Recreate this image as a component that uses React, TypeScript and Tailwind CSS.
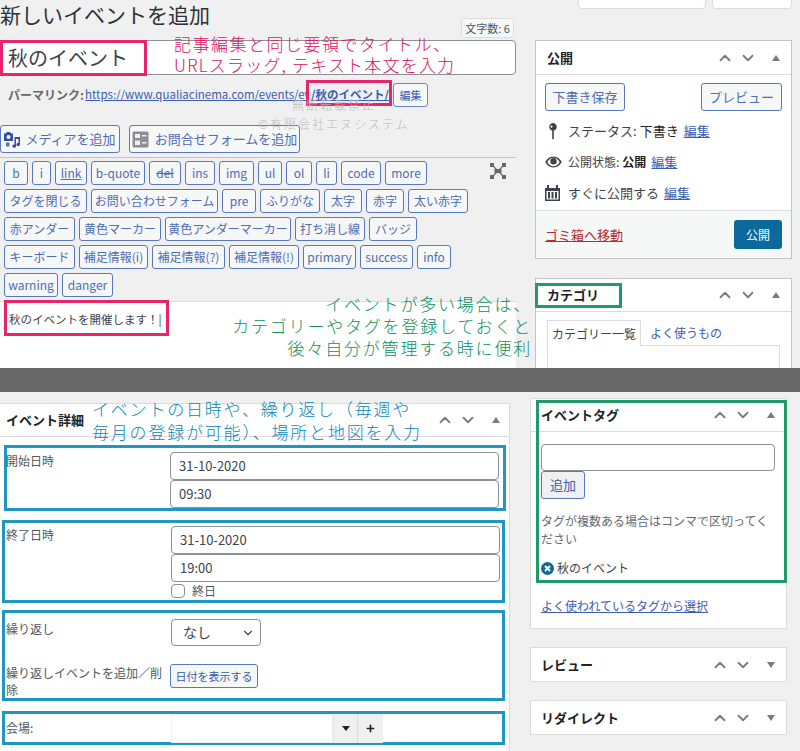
import { ChevronDown, ChevronUp, Plus } from 'lucide-react';

const toolbarRows: [string, string, string?][][] = [
  [
    ['b', 'w-[24px]'], ['i', 'w-[19px]'], ['link', 'w-[32px]', 'underline'], ['b-quote', 'w-[54px]'],
    ['del', 'w-[32px]', 'line-through'], ['ins', 'w-[30px]'], ['img', 'w-[35px]'], ['ul', 'w-[24px]'],
    ['ol', 'w-[26px]'], ['li', 'w-[21px]'], ['code', 'w-[40px]'], ['more', 'w-[42px]'],
  ],
  [
    ['タグを閉じる', 'w-[83px]'], ['お問い合わせフォーム', 'w-[127px]'], ['pre', 'w-[34px]'], ['ふりがな', 'w-[60px]'],
    ['太字', 'w-[38px]'], ['赤字', 'w-[38px]'], ['太い赤字', 'w-[60px]'],
  ],
  [
    ['赤アンダー', 'w-[71px]'], ['黄色マーカー', 'w-[82px]'], ['黄色アンダーマーカー', 'w-[126px]'],
    ['打ち消し線', 'w-[70px]'], ['バッジ', 'w-[48px]'],
  ],
  [
    ['キーボード', 'w-[71px]'], ['補足情報(i)', 'w-[69px]'], ['補足情報(?)', 'w-[73px]'], ['補足情報(!)', 'w-[70px]'],
    ['primary', 'w-[53px]'], ['success', 'w-[53px]'], ['info', 'w-[34px]'],
  ],
  [['warning', 'w-[54px]'], ['danger', 'w-[51px]']],
];

function BoxControls({ open = true }: { open?: boolean }) {
  return (
    <div className="flex items-center text-[#787c82]">
      <ChevronUp size={18} strokeWidth={2.4} />
      <ChevronDown size={18} strokeWidth={2.4} className="ml-[5px]" />
      <svg width="10" height="8" viewBox="0 0 10 8" className="ml-[14px] mr-[1px]" fill="#787c82">
        {open ? <path d="M5 1l4 6H1z" /> : <path d="M5 7L1 1h8z" />}
      </svg>
    </div>
  );
}

function BoxHeader({ title, pad = 'pl-[10px]' }: { title: string; pad?: string }) {
  return (
    <div className={`flex h-[33px] items-center justify-between border-b border-[#dcdcde] pr-[9px] ${pad}`}>
      <span className="text-[13px] font-bold text-[#1d2327]">{title}</span>
      <BoxControls />
    </div>
  );
}

function DateInput({ value }: { value: string }) {
  return (
    <div className="flex h-[28px] w-[329px] items-center rounded-[4px] border border-[#8c8f94] bg-white pl-[8px] text-[13px] text-[#3c434a]">
      {value}
    </div>
  );
}

export default function App() {
  return (
    <div className="h-[751px] w-[800px] overflow-hidden bg-[#f0f0f1] font-['Noto_Sans_CJK_JP',sans-serif] text-[#3c434a]">
      {/* upper capture */}
      <section className="relative flex h-[368px] overflow-hidden">
        <div className="w-[516px] shrink-0">
          <div className="flex h-[40px] items-start justify-between">
            <h1 className="mt-[-2px] text-[21px] leading-[32px] text-[#2c3338]">新しいイベントを追加</h1>
            <div className="mt-[18px] mr-[2px] flex h-[20px] w-[53px] items-center justify-center rounded-[3px] border border-[#dcdcde] bg-[#f6f7f7] text-[11px] text-[#50575e]">
              文字数: 6
            </div>
          </div>
          <div className="flex h-[35px] items-center rounded-[4px] border border-[#8c8f94] bg-white pl-[7px] text-[20px] text-[#3c434a]">
            秋のイベント
          </div>
          <div className="mt-[8px] flex h-[24px] items-center pl-[8px] text-[12px]">
            <span className="w-[75px] whitespace-nowrap font-bold text-[#646970]">パーマリンク:</span>
            <a className="ml-[2px] w-[221px] overflow-hidden whitespace-nowrap text-[11.500px] text-[#3b5cb0] underline">https://www.qualiacinema.com/events/event/</a>
            <a className="ml-[5px] w-[82px] whitespace-nowrap text-[11.500px] font-bold text-[#3b5cb0] underline">/秋のイベント/</a>
            <span className="flex h-[24px] w-[35px] items-center justify-center rounded-[3px] border border-[#6d86c4] bg-[#f6f7f7] text-[11px] text-[#3b5cb0]">編集</span>
          </div>
          <div className="mt-[18px] flex gap-[9px] border-b border-[#c3c4c7] pb-[4px]">
            <button className="flex h-[28px] w-[120px] items-center justify-center gap-[5px] rounded-[3px] border border-[#5a78c0] bg-[#f6f7f7] text-[13px] text-[#4f6cb6]">
              <svg width="16" height="17" viewBox="0 0 16 17" fill="#33509f">
                <path d="M3 1h3l1 1.500h2v7.500H0V2.500h2zM4.500 4a2 2 0 1 0 .01 0z" fillRule="evenodd" />
                <path d="M10.500 6H16v7.500a1.800 1.600 0 1 1-1.500-1.500V8h-2.500v7a1.800 1.600 0 1 1-1.500-1.500z" />
                <path d="M2 11.500h3.500v4H2z" opacity="0.8" />
              </svg>
              メディアを追加
            </button>
            <button className="flex h-[28px] w-[171px] items-center justify-center gap-[6px] rounded-[3px] border border-[#5a78c0] bg-[#f6f7f7] text-[13px] text-[#4f6cb6]">
              <svg width="17" height="17" viewBox="0 0 17 17">
                <rect x="0.500" y="0.500" width="16" height="16" rx="1.500" fill="#8c8f94" />
                <rect x="3" y="3" width="5" height="4" fill="#f0f0f1" />
                <rect x="3" y="9.500" width="5" height="4.500" fill="#f0f0f1" />
                <rect x="10" y="4" width="4.500" height="1.500" fill="#f0f0f1" />
                <rect x="10" y="11" width="4.500" height="1.500" fill="#f0f0f1" />
              </svg>
              お問合せフォームを追加
            </button>
          </div>
          <div className="relative flex h-[143px] flex-col gap-[4px] pl-[4px] pt-[3px]">
            {toolbarRows.map((row, r) => (
              <div key={r} className="flex gap-[4px]">
                {row.map(([label, w, deco]) => (
                  <span key={label} className={`flex h-[24px] items-center justify-center rounded-[3px] border border-[#5a78c0] bg-[#f6f7f7] text-[12px] text-[#4f6cb6] ${w} ${deco ?? ''}`}>
                    {label}
                  </span>
                ))}
              </div>
            ))}
            <svg width="16" height="16" viewBox="0 0 16 16" className="absolute left-[490px] top-[5px]" fill="#646970" stroke="#646970">
              <path d="M2 2l12 12M14 2L2 14" strokeWidth="1.200" />
              <path d="M0 0h4v4H0zM12 0h4v4h-4zM0 12h4v4H0zM12 12h4v4h-4zM4.500 6h7v4h-7z" stroke="none" />
            </svg>
          </div>
          <div className="h-[68px] border-t border-[#dcdcde] bg-white pl-[9px] pt-[9px] text-[11.500px] text-[#3c434a]">
            秋のイベントを開催します！|
          </div>
        </div>

        <aside className="relative ml-[19px] w-[257px] shrink-0">
          <div className="mt-[-4px] mb-[31px] flex justify-end gap-[6px]">
            <div className="h-[13px] w-[128px] rounded-[4px] border border-[#dcdcde] bg-white" />
            <div className="h-[13px] w-[80px] rounded-[4px] border border-[#dcdcde] bg-white" />
          </div>
          <div className="border border-[#c3c4c7] bg-white">
            <div className="flex h-[34px] items-center justify-between border-b border-[#dcdcde] pl-[11px] pr-[9px]">
              <span className="text-[13px] font-bold text-[#1d2327]">公開</span>
              <BoxControls />
            </div>
            <div className="px-[9px] pt-[8px]">
              <div className="flex justify-between">
                <span className="flex h-[28px] w-[80px] items-center justify-center rounded-[3px] border border-[#5a78c0] bg-[#f6f7f7] text-[13px] text-[#4f6cb6]">下書き保存</span>
                <span className="flex h-[28px] w-[81px] items-center justify-center rounded-[3px] border border-[#5a78c0] bg-[#f6f7f7] text-[13px] text-[#4f6cb6]">プレビュー</span>
              </div>
              <div className="mt-[4px] flex h-[31px] items-center text-[13px]">
                <svg width="16" height="18" viewBox="0 0 16 18" fill="#3c434a" className="mr-[7px]">
                  <path d="M8 1a3.800 3.800 0 1 1-.01 0zM6.500 3.500a1 1 0 1 0 .01 0z" fillRule="evenodd" />
                  <path d="M7.200 8h1.600v8.500L8 17.500l-.8-1z" />
                </svg>
                ステータス: <b className="ml-[3px] font-normal text-[#1d2327]">下書き</b>
                <a className="ml-[5px] text-[#3b5cb0] underline">編集</a>
              </div>
              <div className="flex h-[31px] items-center text-[12px]">
                <svg width="17" height="14" viewBox="0 0 17 14" fill="#3c434a" className="mr-[6px]">
                  <path d="M8.500 1.500C4.500 1.500 1.500 4.500.300 7c1.200 2.500 4.200 5.500 8.200 5.500s7-3 8.200-5.500c-1.200-2.500-4.200-5.500-8.200-5.500zm0 9.800C5.800 11.300 3.500 9.300 2.300 7c1.200-2.300 3.500-4.300 6.200-4.300s5 2 6.200 4.300c-1.200 2.300-3.500 4.300-6.200 4.300z" />
                  <circle cx="8.500" cy="6.300" r="3.200" />
                </svg>
                公開状態: <b className="ml-[3px] text-[#1d2327]">公開</b>
                <a className="ml-[5px] text-[13px] text-[#3b5cb0] underline">編集</a>
              </div>
              <div className="flex h-[31px] items-center text-[13px]">
                <svg width="15" height="16" viewBox="0 0 15 16" fill="#3c434a" className="mr-[8px]">
                  <path d="M0 3h2V0h2v3h7V0h2v3h2v13H0zm1.500 3v8.500h12V6z" fillRule="evenodd" />
                  <path d="M3 7h2v6.500H3zM6.500 7h2v6.500h-2zM10 7h2v6.500h-2z" />
                </svg>
                すぐに公開する
                <a className="ml-[5px] text-[#3b5cb0] underline">編集</a>
              </div>
            </div>
            <div className="mt-[2px] flex h-[48px] items-center justify-between border-t border-[#dcdcde] bg-[#f6f7f7] pl-[9px] pr-[9px]">
              <a className="text-[13px] text-[#b32d2e] underline">ゴミ箱へ移動</a>
              <span className="flex h-[29px] w-[48px] items-center justify-center rounded-[3px] bg-[#0b6a9b] text-[12px] text-white">公開</span>
            </div>
          </div>
          <div className="mt-[19px] h-[120px] border border-[#c3c4c7] bg-white">
            <BoxHeader title="カテゴリ" pad="pl-[11px]" />
            <div className="flex pl-[11px] pt-[8px]">
              <span className="z-10 flex h-[26px] w-[94px] items-center justify-center border border-b-0 border-[#dcdcde] bg-white text-[12px]">カテゴリー一覧</span>
              <span className="flex h-[26px] items-center pl-[9px] text-[12px] text-[#3b5cb0]">よく使うもの</span>
            </div>
            <div className="ml-[11px] mt-[-1px] h-[40px] w-[233px] border border-[#dcdcde]" />
          </div>
        </aside>

        {/* annotations */}
        <div className="absolute left-0 top-[40px] h-[36px] w-[147px] border-[3px] border-[#e8246a]" />
        <div className="absolute left-[306px] top-[80px] h-[26px] w-[86px] border-[3px] border-[#e8246a]" />
        <div className="absolute left-[4px] top-[300px] h-[36px] w-[165px] border-[3px] border-[#e8246a]" />
        <div className="absolute left-[535px] top-[283px] h-[25px] w-[87px] border-[3px] border-[#1f9b6a]" />
        <p className="absolute left-[174px] top-[32px] whitespace-nowrap text-[17px] font-light leading-[24px] tracking-[1.500px] text-[#e0105e]">記事編集と同じ要領でタイトル、</p>
        <p className="absolute left-[174px] top-[53px] whitespace-nowrap text-[17px] font-light leading-[24px] tracking-[1.200px] text-[#e0105e]">URLスラッグ, テキスト本文を入力</p>
        <div className="absolute left-[254px] top-[95px] w-[160px] text-center text-[12px] font-light leading-[19px] tracking-[2px] text-[#b9babb]">
          <p>無断転載禁止</p>
          <p className="whitespace-nowrap">©有限会社エヌシステム</p>
        </div>
        <div className="absolute right-[268px] top-[293px] text-right text-[17px] font-light leading-[22px] tracking-[1.800px] text-[#0f8f5c]">
          <p>イベントが多い場合は、</p>
          <p>カテゴリーやタグを登録しておくと</p>
          <p>後々自分が管理する時に便利</p>
        </div>
      </section>

      <div className="h-[24px] bg-[#666766]" />

      {/* lower capture */}
      <section className="relative flex h-[359px] overflow-hidden">
        <div className="mt-[11px] h-[348px] w-[510px] shrink-0 border-r border-t border-[#dcdcde] bg-white">
          <div className="flex h-[33px] items-center justify-between border-b border-[#dcdcde] pl-[6px] pr-[7px]">
            <span className="text-[13px] font-bold text-[#1d2327]">イベント詳細</span>
            <BoxControls />
          </div>
          <div className="ml-[4px] mr-[3px] mt-[8px] flex h-[66px] border-[3px] border-[#2096c4] pt-[4px] text-[12px]">
            <span className="ml-[-1px] w-[164px] leading-[18px] text-[#50575e]">開始日時</span>
            <div>
              <DateInput value="31-10-2020" />
              <DateInput value="09:30" />
            </div>
          </div>
          <div className="ml-[2px] mr-[4px] mt-[9px] flex h-[83px] border-[3px] border-[#2096c4] pt-[3px] text-[12px]">
            <span className="w-[166px] pl-[1px] leading-[18px] text-[#50575e]">終了日時</span>
            <div>
              <DateInput value="31-10-2020" />
              <DateInput value="19:00" />
              <label className="flex h-[17px] items-center">
                <span className="h-[14px] w-[14px] rounded-[4px] border border-[#8c8f94] bg-white" />
                <span className="ml-[7px] text-[12px] text-[#50575e]">終日</span>
              </label>
            </div>
          </div>
          <div className="ml-[2px] mr-[4px] mt-[7px] h-[91px] border-[3px] border-[#2096c4] text-[12px] text-[#50575e]">
            <div className="flex pt-[6px]">
              <span className="mt-[1px] w-[166px] pl-[1px]">繰り返し</span>
              <div className="flex h-[27px] w-[90px] items-center justify-between rounded-[4px] border border-[#8c8f94] bg-white pl-[11px] pr-[5px] text-[14px] text-[#3c434a]">
                なし
                <ChevronDown size={14} strokeWidth={2} />
              </div>
            </div>
            <div className="mt-[18px] flex">
              <span className="w-[165px] pl-[1px] leading-[17px]">繰り返しイベントを追加／削除</span>
              <span className="flex h-[24px] w-[88px] items-center justify-center rounded-[3px] border border-[#5a78c0] bg-[#f6f7f7] text-[11px] text-[#3b5cb0]">日付を表示する</span>
            </div>
          </div>
          <div className="ml-[2px] mr-[4px] mt-[10px] flex h-[34px] items-center border-[3px] border-[#2096c4] text-[12px] text-[#50575e]">
            <span className="w-[166px] pl-[1px]">会場:</span>
            <div className="flex h-[29px] w-[212px] self-start">
              <div className="w-[162px] border border-[#f0f0f1] bg-white" />
              <div className="flex w-[24px] items-center justify-center border-l border-[#e5e5e5] bg-[#f0f0f1]">
                <svg width="8" height="5" viewBox="0 0 8 5" fill="#1d2327"><path d="M0 0h8L4 5z" /></svg>
              </div>
              <div className="flex w-[26px] items-center justify-center border-l border-[#dcdcde] bg-[#f0f0f1]">
                <Plus size={11} strokeWidth={3.5} color="#1d2327" />
              </div>
            </div>
          </div>
        </div>

        <aside className="ml-[20px] mt-[6px] w-[257px] shrink-0">
          <div className="h-[231px] border border-[#dcdcde] bg-white">
            <BoxHeader title="イベントタグ" />
            <div className="px-[10px] pt-[12px]">
              <div className="h-[27px] w-[234px] rounded-[4px] border border-[#8c8f94] bg-white" />
              <span className="flex h-[28px] w-[44px] items-center justify-center rounded-[3px] border border-[#5a78c0] bg-[#f0f0f1] text-[13px] text-[#3b5cb0]">追加</span>
              <p className="mt-[13px] text-[12px] leading-[18px] text-[#646970]">タグが複数ある場合はコンマで区切ってください</p>
              <div className="mt-[11px] flex h-[18px] items-center text-[12px]">
                <svg width="13" height="13" viewBox="0 0 13 13" className="mr-[3px]">
                  <circle cx="6.500" cy="6.500" r="6.500" fill="#0b6a9b" />
                  <path d="M4 4l5 5M9 4l-5 5" stroke="#fff" strokeWidth="2" />
                </svg>
                秋のイベント
              </div>
              <a className="mt-[20px] block text-[12px] text-[#3b5cb0] underline">よく使われているタグから選択</a>
            </div>
          </div>
          <div className="mt-[18px] h-[35px] border border-[#dcdcde] bg-white">
            <div className="flex h-[33px] items-center justify-between pl-[10px] pr-[9px]">
              <span className="text-[13px] font-bold text-[#1d2327]">レビュー</span>
              <BoxControls open={false} />
            </div>
          </div>
          <div className="mt-[18px] h-[35px] border border-[#dcdcde] bg-white">
            <div className="flex h-[33px] items-center justify-between pl-[10px] pr-[9px]">
              <span className="text-[13px] font-bold text-[#1d2327]">リダイレクト</span>
              <BoxControls open={false} />
            </div>
          </div>
        </aside>

        {/* annotations */}
        <div className="absolute left-[536px] top-[8px] h-[183px] w-[251px] border-[3px] border-[#1f9b6a]" />
        <div className="absolute left-[92px] top-[5px] whitespace-nowrap text-[17px] font-light leading-[23px] tracking-[1.800px] text-[#0e86b8]">
          <p>イベントの日時や、繰り返し（毎週や</p>
          <p>毎月の登録が可能）、場所と地図を入力</p>
        </div>
      </section>
    </div>
  );
}
